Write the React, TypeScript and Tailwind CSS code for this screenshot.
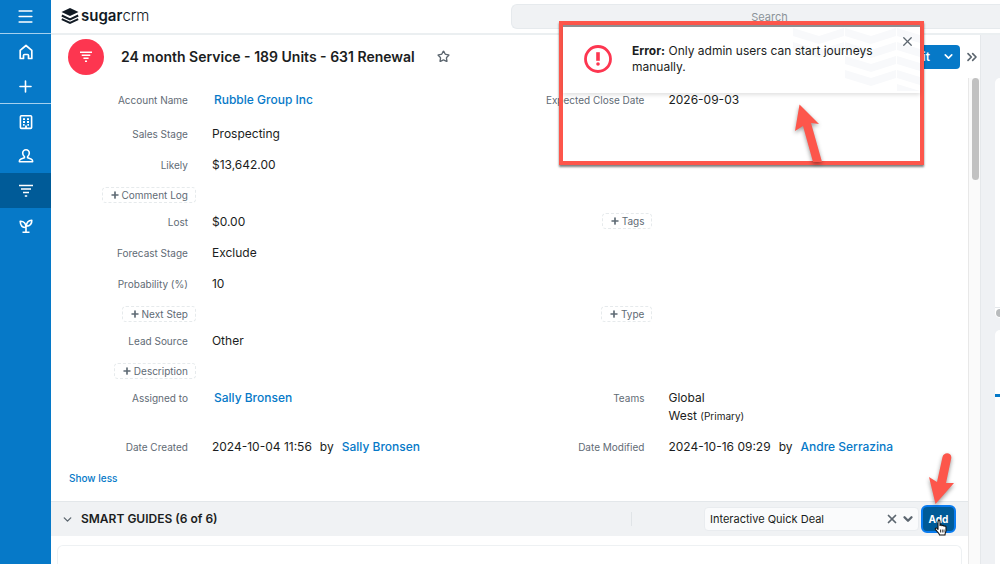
import React from 'react';
import { ChevronDown, ChevronsRight, Menu, Plus, Star, X } from 'lucide-react';

interface Field {
  label: string;
  value?: React.ReactNode;
  empty?: boolean;
}

interface FieldRow {
  left: Field;
  right?: Field;
  compact?: boolean;
}

const RecordLink: React.FC<{ children: React.ReactNode }> = ({ children }) => (
  <a href="#" className="px-0.5 font-medium text-[#0679c8]">
    {children}
  </a>
);

const Stamp: React.FC<{ date: string; user: string }> = ({ date, user }) => (
  <span className="flex gap-2">
    <span>{date}</span>
    <span>by</span>
    <a href="#" className="font-medium text-[#0679c8]">{user}</a>
  </span>
);

const rows: FieldRow[] = [
  {
    left: { label: 'Account Name', value: <RecordLink>Rubble Group Inc</RecordLink> },
    right: { label: 'Expected Close Date', value: '2026-09-03' },
  },
  { left: { label: 'Sales Stage', value: 'Prospecting' } },
  { left: { label: 'Likely', value: '$13,642.00' } },
  { left: { label: 'Comment Log', empty: true }, compact: true },
  { left: { label: 'Lost', value: '$0.00' }, right: { label: 'Tags', empty: true } },
  { left: { label: 'Forecast Stage', value: 'Exclude' } },
  { left: { label: 'Probability (%)', value: '10' } },
  { left: { label: 'Next Step', empty: true }, right: { label: 'Type', empty: true }, compact: true },
  { left: { label: 'Lead Source', value: 'Other' } },
  { left: { label: 'Description', empty: true }, compact: true },
  {
    left: { label: 'Assigned to', value: <RecordLink>Sally Bronsen</RecordLink> },
    right: {
      label: 'Teams',
      value: (
        <>
          Global
          <br />
          West <span className="text-[10px]">(Primary)</span>
        </>
      ),
    },
  },
  {
    left: { label: 'Date Created', value: <Stamp date="2024-10-04 11:56" user="Sally Bronsen" /> },
    right: { label: 'Date Modified', value: <Stamp date="2024-10-16 09:29" user="Andre Serrazina" /> },
  },
];

const FieldCell: React.FC<{ field: Field }> = ({ field }) => (
  <div className="flex items-start">
    <div className="flex w-[30%] shrink-0 justify-end whitespace-nowrap text-[10px] text-[#5f6b75]">
      {field.empty ? (
        <button className="-mr-2 flex h-4 items-center gap-0.5 rounded border border-dashed border-[#e6eaec] px-[7px] leading-none">
          <Plus size={10} strokeWidth={4} />
          {field.label}
        </button>
      ) : (
        <span>{field.label}</span>
      )}
    </div>
    <div className="whitespace-nowrap pl-6 text-[12px]">{field.value}</div>
  </div>
);

const FilterIcon: React.FC<{ className?: string }> = ({ className }) => (
  <svg viewBox="0 0 16 14" className={className} fill="none" stroke="currentColor" strokeWidth="1.7">
    <path d="M1 1.5h14M3 5h10M5 8.5h6M6.8 12h2.4" />
  </svg>
);

const HomeIcon = () => (
  <svg viewBox="0 0 16 16" className="size-4" fill="none" stroke="currentColor" strokeWidth="1.7" strokeLinejoin="round">
    <path d="M2.2 6.3 8 1.500l5.800 4.800v8.200h-3.300V11.500a1 1 0 0 0-1-1h-3a1 1 0 0 0-1 1v3H2.200z" />
  </svg>
);

const BuildingIcon = () => (
  <svg viewBox="0 0 16 16" className="size-4" fill="none" stroke="currentColor" strokeWidth="1.6">
    <rect x="2.4" y="1.8" width="11.2" height="12.6" rx="1" />
    <path d="M5 5.2h2M9 5.2h2M5 8h2M9 8h2M5 10.8h1.6M9.4 10.8H11M8 14.4v-3" strokeWidth="1.8" />
  </svg>
);

const PersonIcon = () => (
  <svg viewBox="0 0 16 16" className="size-4" fill="none" stroke="currentColor" strokeWidth="1.6" strokeLinejoin="round">
    <path d="M8 1.8c-2 0-3.3 1.400-3.300 3.300 0 1.700.7 2.900 1.700 3.600v1.100L3 10.900c-1 .4-1.600 1.200-1.600 2.200v.7h13.200v-.7c0-1-.6-1.800-1.600-2.200l-3.400-1.100V8.700c1-.7 1.700-1.900 1.700-3.600C11.300 3.200 10 1.800 8 1.800z" />
  </svg>
);

const SproutIcon = () => (
  <svg viewBox="0 0 16 16" className="size-4" fill="none" stroke="currentColor" strokeWidth="1.6" strokeLinejoin="round">
    <path d="M8 14V8.500M4.500 14.200h7M8 9.500C4.500 9.500 2.300 7 2.200 3.200 5.800 3 8 5.500 8 9.500zM8.400 8.300c-.2-3.500 1.800-6 5.400-6.100.2 3.500-1.700 6-5.400 6.100z" />
  </svg>
);

const Sidebar = () => {
  const item = 'flex h-[35px] w-full items-center justify-center';
  return (
    <nav className="flex w-[51px] shrink-0 flex-col bg-[#0679c8] text-white">
      <button aria-label="Menu" className="flex h-[34px] items-center justify-center border-b border-[#a5d0ee]">
        <Menu size={19} strokeWidth={2} />
      </button>
      <div className="border-b border-[#a5d0ee]">
        <button aria-label="Home" className={item}><HomeIcon /></button>
        <button aria-label="Quick create" className="flex h-[34px] w-full items-center justify-center">
          <Plus size={19} strokeWidth={2} />
        </button>
      </div>
      <button aria-label="Accounts" className={item}><BuildingIcon /></button>
      <button aria-label="Contacts" className="flex h-[34px] w-full items-center justify-center"><PersonIcon /></button>
      <button aria-label="Opportunities" className={`${item} bg-[#005b98]`}>
        <FilterIcon className="h-3.5 w-4" />
      </button>
      <button aria-label="Leads" className={item}><SproutIcon /></button>
    </nav>
  );
};

const TopBar = () => (
  <header className="flex h-[35px] shrink-0 items-start border-b-2 border-[#ebeff1] pl-2.5 pt-1">
    <a href="#" className="flex h-6 w-[450px] shrink-0 items-center gap-0.5 text-[#111a24]">
      <svg viewBox="0 0 18 16" className="h-4 w-[18px]">
        <path d="M9 0 17.500 4 9 8 .5 4z" fill="currentColor" />
        <path d="M.8 7.500 9 11.300l8.200-3.800M.8 11.100 9 14.900l8.200-3.800" fill="none" stroke="currentColor" strokeWidth="2" />
      </svg>
      <span className="text-[15px] leading-5">
        <span className="font-semibold">sugar</span>
        <span className="font-light">crm</span>
      </span>
    </a>
    <input
      type="text"
      aria-label="Search"
      placeholder="Search"
      className="h-[25px] min-w-0 flex-1 rounded-l-md border border-r-0 border-[#e6eaed] bg-[#f0f2f4] pl-[27px] text-center text-[11px] placeholder:text-[#8b9298]"
    />
  </header>
);

const RecordHeader = () => (
  <div className="flex h-[43px] shrink-0 items-center pl-[17px]">
    <div className="flex size-9 shrink-0 items-center justify-center rounded-full bg-[#fd3650] text-white">
      <FilterIcon className="h-3 w-3.5" />
    </div>
    <h1 className="ml-[17px] whitespace-nowrap text-[14px] font-semibold">24 month Service - 189 Units - 631 Renewal</h1>
    <button aria-label="Favorite" className="ml-[22px] text-[#5c666f]">
      <Star size={13} strokeWidth={2.5} />
    </button>
    <div className="ml-auto flex h-6 overflow-hidden rounded bg-[#0679c8] text-white">
      <button className="pl-3 pr-1.5 text-[12px] font-semibold">Edit</button>
      <button aria-label="More actions" className="flex w-6 items-center justify-center">
        <ChevronDown size={13} strokeWidth={3} />
      </button>
    </div>
    <button aria-label="Collapse dashboard" className="ml-1 text-[#5c666f]">
      <ChevronsRight size={16} strokeWidth={2.5} />
    </button>
  </div>
);

const SmartGuides = () => (
  <section className="flex flex-1 flex-col">
    <div className="flex h-[35px] shrink-0 items-center border-t border-[#e3e7ea] bg-[#f0f2f4] pl-2.5 pr-3">
      <ChevronDown size={13} strokeWidth={2.5} className="text-[#5c666f]" />
      <h2 className="ml-[7px] text-[12px] font-semibold">SMART GUIDES (6 of 6)</h2>
      <div className="ml-auto mr-[72px] h-3.5 w-px bg-[#e0e4e7]" />
      <div className="mr-0.5 flex h-6 w-[215px] items-center rounded-sm border border-[#e9ecef] bg-[#fafbfc] text-[#5c666f]">
        <select aria-label="Smart guide" className="min-w-0 flex-1 appearance-none pl-[5px] text-[11px] text-[#1b1d21] outline-none">
          <option>Interactive Quick Deal</option>
        </select>
        <button aria-label="Clear selection" className="mr-0.5"><X size={14} strokeWidth={3} /></button>
        <ChevronDown size={14} strokeWidth={4} className="mr-[3px]" />
      </div>
      <button className="h-7 w-[35px] rounded-md border-2 border-[#0a7cf0] bg-[#005b98] text-[10px] font-bold text-white">
        Add
      </button>
    </div>
    <div className="mx-[6px] mt-[9px] min-h-5 flex-1 rounded-t-md border border-b-0 border-[#eef1f3]" />
  </section>
);

const Dashboard = () => (
  <aside className="flex w-5 shrink-0 flex-col gap-3 border-l border-[#e5e8eb] bg-[#eff1f4] pl-3.5 pt-[43px]">
    <div className="flex h-[240px] flex-col justify-end overflow-hidden rounded-l-md bg-white">
      <div className="h-[11px] border-t border-[#e5e8eb] pl-px pt-px">
        <div className="size-2 rounded-full bg-[#b8bbbd]" />
      </div>
    </div>
    <div className="flex-1 rounded-tl-md bg-white pt-[64px]">
      <div className="h-[3px] bg-[#0679c8]" />
    </div>
  </aside>
);

const ErrorAlert = () => (
  <div role="alert" className="relative flex h-[68px] items-start bg-white pl-[21px] shadow-[0_2px_4px_rgba(0,0,0,0.12)]">
    <svg viewBox="0 0 128 66" className="absolute right-0 top-0 h-[66px] w-32" fill="#f8f9fb">
      <path d="M1 3l26 8 25-8v8l-25 8-26-8zM1 17l26 8 25-8v8l-25 8-26-8z" />
      <path d="M53 3l26 8 25-8v8l-25 8-26-8zM53 17l26 8 25-8v8l-25 8-26-8zM53 31l26 8 25-8v8l-25 8-26-8zM53 45l26 8 25-8v8l-25 8-26-8z" />
      <path d="M105 3l23 7v8l-23-7zM105 17l23 7v8l-23-7zM105 31l23 7v8l-23-7zM105 45l23 7v8l-23-7zM105 59l23 7h-23z" />
    </svg>
    <svg viewBox="0 0 28 28" className="mt-5 size-7 shrink-0">
      <circle cx="14" cy="14" r="12.500" fill="none" stroke="#fd3650" strokeWidth="2.800" />
      <path d="M12.200 7.200h3.600v8.600h-3.600z" fill="#fd3650" />
      <circle cx="14" cy="19" r="1.800" fill="#fd3650" />
    </svg>
    <p className="relative ml-5 mt-[18px] flex-1 pr-10 text-[12px] leading-4">
      <strong className="font-bold">Error:</strong> Only admin users can start journeys manually.
    </p>
    <button aria-label="Dismiss" className="absolute right-[5px] top-[9px] text-[#5c666f]">
      <X size={15} strokeWidth={2} />
    </button>
  </div>
);

const App: React.FC = () => (
  <div className="relative flex h-screen overflow-hidden bg-white font-[Inter,sans-serif] text-[#1b1d21]">
    <Sidebar />
    <div className="flex min-w-0 flex-1 flex-col">
      <TopBar />
      <div className="flex min-h-0 flex-1">
        <main className="flex min-w-0 flex-1 flex-col">
          <RecordHeader />
          <div className="flex min-h-0 flex-1">
            <div className="flex min-w-0 flex-1 flex-col">
              <div className="pr-1 pt-[13px] leading-[18px]">
                {rows.map((row, index) => (
                  <div
                    key={row.left.label}
                    className={`grid grid-cols-2 ${row.compact ? 'mb-2.5 h-4' : index === 0 ? 'mb-4' : 'mb-[13px]'}`}
                  >
                    <FieldCell field={row.left} />
                    {row.right && <FieldCell field={row.right} />}
                  </div>
                ))}
              </div>
              <button className="mb-[14px] ml-[18px] self-start text-[10px] font-medium leading-[18px] text-[#0679c8]">
                Show less
              </button>
              <SmartGuides />
            </div>
            {/* Scroll track */}
            <div className="w-3 shrink-0 border-l border-[#e8e8e8] bg-[#fafafa] pl-[3px]">
              <div className="h-[102px] w-[7px] rounded-full bg-[#c1c1c1]" />
            </div>
          </div>
        </main>
        <Dashboard />
      </div>
    </div>

    {/* Callout around the alert */}
    <div className="absolute right-[76px] top-[21px] h-[144px] w-[365px] border-4 border-[#fd564b] shadow-[0_2px_2px_rgba(0,0,0,0.5)]">
      <ErrorAlert />
      <div className="absolute inset-x-0 top-0 h-0.5 bg-[#5e6064]/70" />
      <svg viewBox="0 0 30 62" className="absolute left-[231px] top-[78px] h-[62px] w-[30px] drop-shadow-[0_2px_2px_rgba(0,0,0,0.4)]" fill="#fd564b">
        <path d="M5.500 1.500 25 21l-8-1 11 39h-9L9 23l-8 5z" />
      </svg>
    </div>

    {/* Arrow and pointer on the Add button */}
    <svg viewBox="0 0 30 56" className="absolute bottom-[58px] right-[43px] h-14 w-[30px] drop-shadow-[0_2px_2px_rgba(0,0,0,0.4)]" fill="#fd564b">
      <path d="M15.500 7c1.500-6 10-4.500 8.700 1.500L19 33l8 0L8.500 54 2 27l8 5z" />
    </svg>
    <svg viewBox="0 0 14 16" className="absolute bottom-7 right-[52px] h-4 w-3.5" fill="#fff" stroke="#111" strokeWidth="1.100" strokeLinejoin="round">
      <path d="M4 1.500c0-1.300 2-1.300 2 0v4c.3-.9 1.900-.8 2 .3.400-.7 1.900-.6 2 .5.600-.6 2-.3 2 .9v3.300c0 1.500-1 2.500-1 4.500H5.500c0-1.500-2-2.500-4-5.500-.6-1.200.6-2 1.600-1.100l.9.900z" />
      <path d="M6.500 9.500v3M8.300 9.500v3M10 9.500v3" strokeWidth=".8" />
    </svg>
  </div>
);

export default App;
